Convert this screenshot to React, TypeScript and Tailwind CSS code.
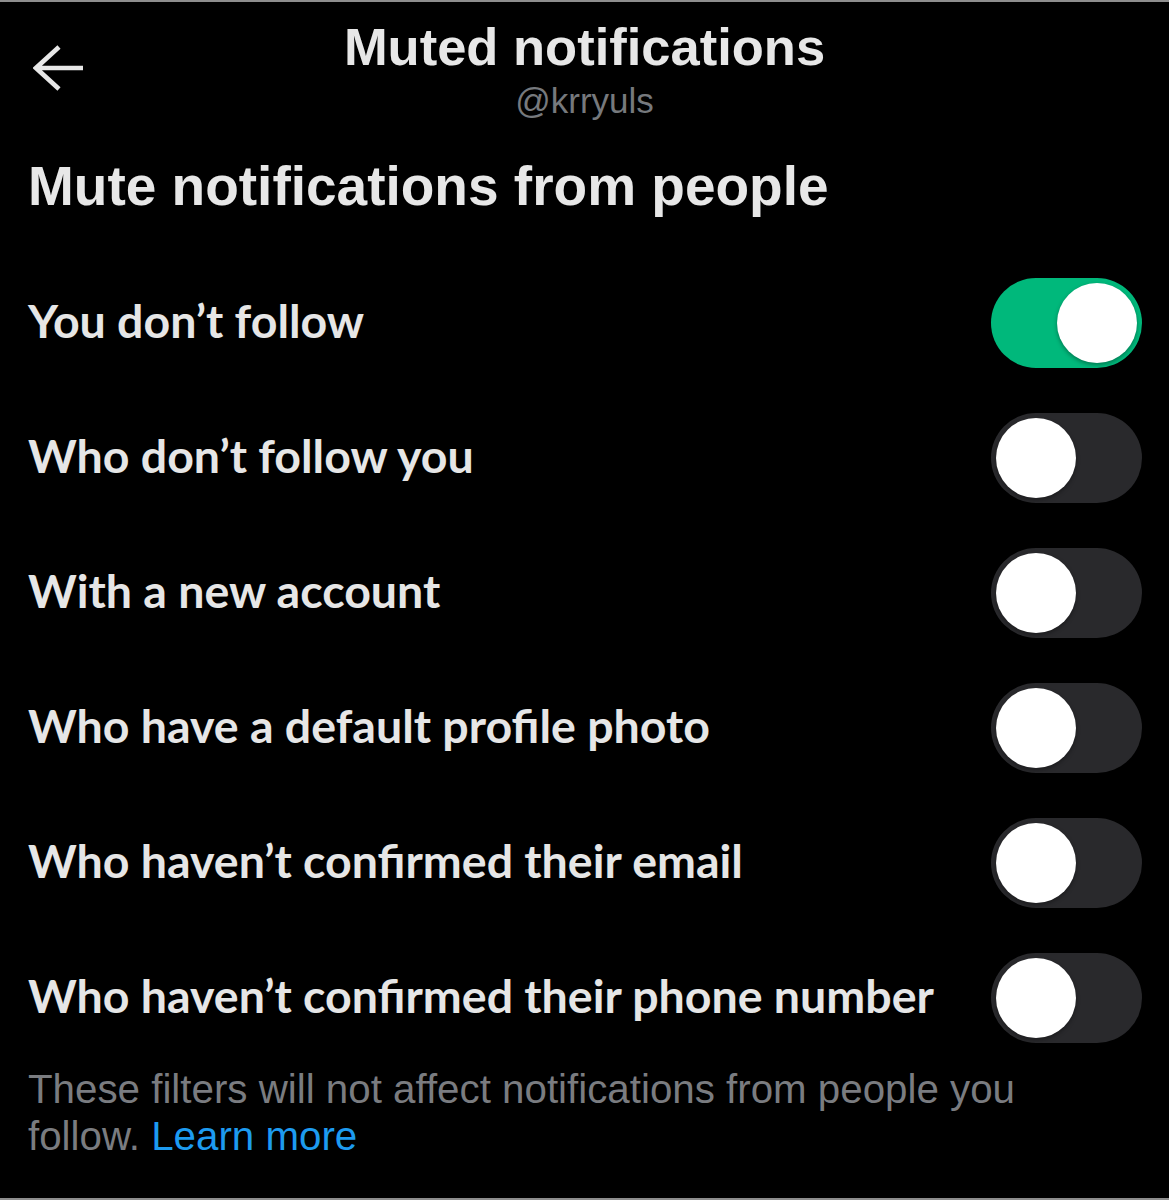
import React from "react";

const rows: { label: string; on: boolean }[] = [
  { label: "You don\u2019t follow", on: true },
  { label: "Who don\u2019t follow you", on: false },
  { label: "With a new account", on: false },
  { label: "Who have a default profile photo", on: false },
  { label: "Who haven\u2019t confirmed their email", on: false },
  { label: "Who haven\u2019t confirmed their phone number", on: false },
];

function Toggle({ on }: { on: boolean }) {
  return (
    <div
      className={
        on
          ? "w-[151px] h-[90px] rounded-full bg-[#00b87b] flex items-center justify-end px-[5px] shrink-0"
          : "w-[151px] h-[90px] rounded-full bg-[#29292c] flex items-center justify-start px-[5px] shrink-0"
      }
    >
      <div className="w-[80px] h-[80px] rounded-full bg-white shadow-[0_2px_4px_rgba(0,0,0,0.35)]" />
    </div>
  );
}

export default function App() {
  return (
    <div className="w-[1169px] h-[1200px] bg-black border-t-2 border-b-2 border-[#8e8e8e] flex flex-col text-[#e7e7e7] font-['Liberation_Sans',Arial,sans-serif]">
      <div className="grid grid-cols-[1fr_auto_1fr] items-center pt-[15px] px-[28px]">
        <div className="flex items-center">
          <svg width="52" height="48" viewBox="0 0 52 48" className="ml-[5px] mt-[-2px]" fill="none">
            <path
              d="M3 24 H50 M26 3 L3 24 L26 45"
              stroke="#e7e7e7"
              strokeWidth="4.6"
              strokeLinejoin="miter"
            />
          </svg>
        </div>
        <div className="flex flex-col items-center">
          <div className="text-[52.5px] leading-[60px] font-bold">Muted notifications</div>
          <div className="text-[35px] leading-[40px] mt-[4px] text-[#76797d]">@krryuls</div>
        </div>
        <div />
      </div>

      <div className="px-[28px] mt-[33px] text-[55px] leading-[64px] font-bold">
        Mute notifications from people
      </div>

      <div className="mt-[37px] flex flex-col">
        {rows.map((r) => (
          <div key={r.label} className="h-[135px] flex items-center justify-between pl-[28px] pr-[27px]">
            <div className="font-['Lato',sans-serif] font-bold text-[46.5px] leading-[54px] mb-[5px] text-[#e6e6e6]">
              {r.label}
            </div>
            <Toggle on={r.on} />
          </div>
        ))}
      </div>

      <div className="mt-[1px] px-[28px] w-[1090px] text-[40.3px] leading-[47px] text-[#7a7c80]">
        <p>These filters will not affect notifications from people you</p>
        <p>
          follow. <span className="text-[#1d9bf0]">Learn more</span>
        </p>
      </div>
    </div>
  );
}
